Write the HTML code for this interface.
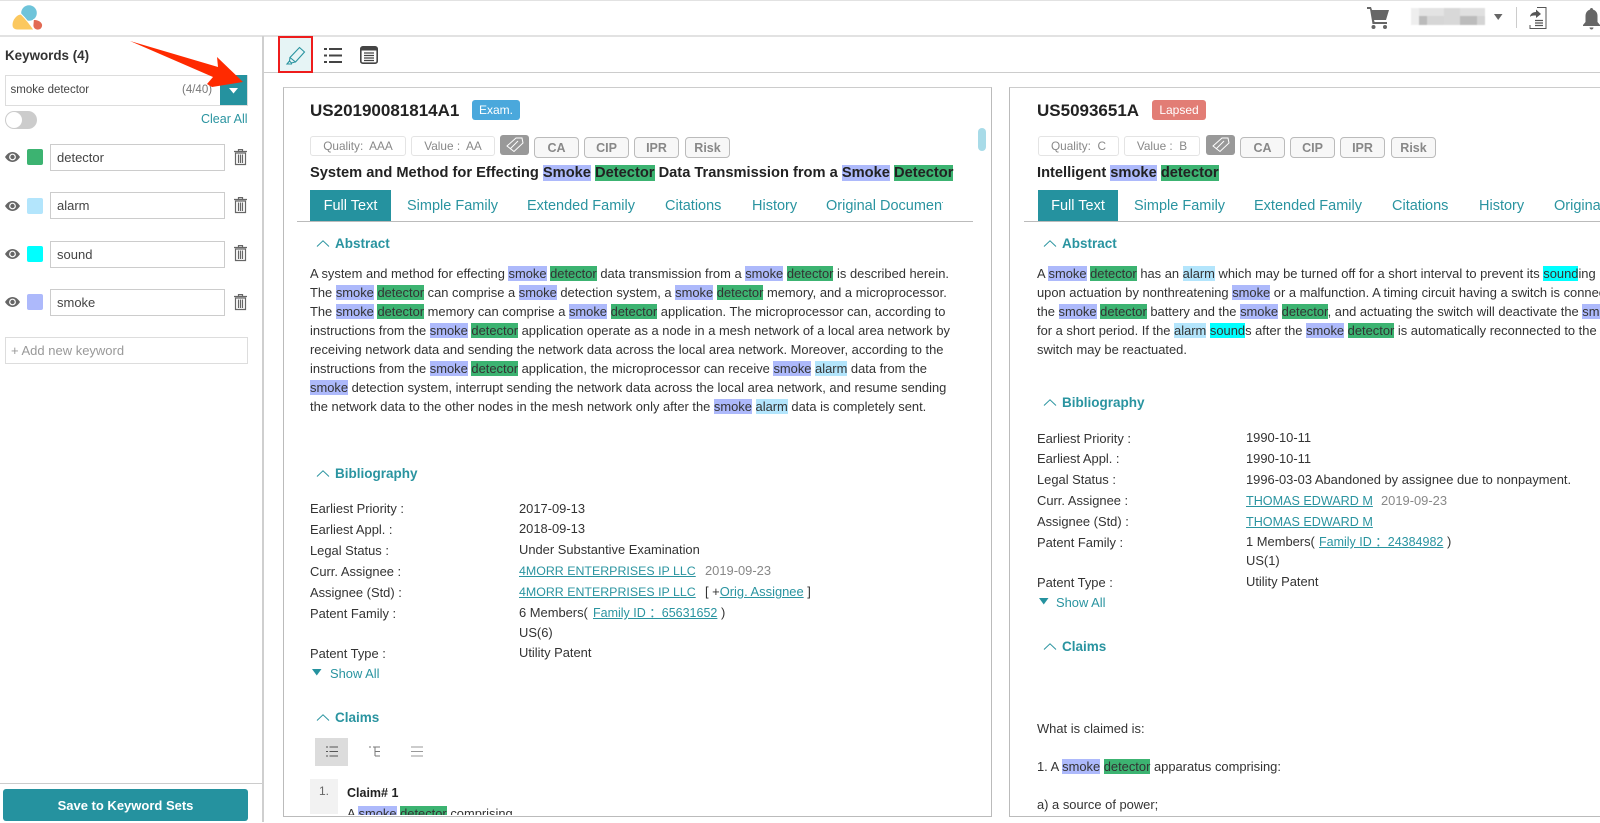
<!DOCTYPE html>
<html><head><meta charset="utf-8"><title>Patent comparison</title>
<style>
html,body{margin:0;padding:0;background:#fff}
body{width:1600px;height:822px;overflow:hidden;position:relative;font-family:"Liberation Sans",Arial,sans-serif;color:#333;font-size:12.92px}
.a{position:absolute;white-space:nowrap}
.box{position:absolute;box-sizing:border-box}
.t{position:absolute;white-space:nowrap;line-height:19px;height:19px}
.s{background:#adb9fb}.d{background:#3cb371}.l{background:#b3e5fc}.n{background:#0ff}
.h{position:absolute;white-space:nowrap;font-weight:bold;color:#2a94a0;font-size:13.5px;line-height:18px}
.tl{position:absolute;white-space:nowrap;color:#2a94a0;font-size:14.5px;line-height:20px;top:196px}
.chip{position:absolute;box-sizing:border-box;top:137px;height:21px;border:1px solid #bbb;border-radius:4px;background:#f7f7f7;color:#888;font-weight:bold;font-size:12.5px;line-height:20px;text-align:center}
.qv{position:absolute;box-sizing:border-box;top:136px;height:20px;border:1px solid #e4e4e4;border-radius:3px;color:#888;font-size:11.8px;line-height:18px;text-align:center}
.tag{position:absolute;top:135px;width:29px;height:20px;background:#999;border-radius:3px}
.kw{position:absolute;box-sizing:border-box;left:50px;width:175px;height:27px;border:1px solid #ccc;padding-left:6px;line-height:25px;font-size:13px;color:#444}
.sw{position:absolute;left:27px;width:16px;height:16px;border-radius:2px}
a{color:#2a94a0;text-decoration:underline}
.g{color:#888}
.ft{position:absolute;top:190px;height:31px;background:#25929f;color:#fff;font-size:14.5px;line-height:32px;text-align:center;white-space:nowrap}
.ln{position:absolute;top:221px;height:1px;background:#bbb}
svg{position:absolute;overflow:visible}
</style></head><body>

<!-- header -->
<div class="box" style="left:0;top:0;width:1600px;height:1px;background:#e2e2e2"></div>
<div class="box" style="left:0;top:35px;width:1600px;height:2px;background:#e2e2e2"></div>
<svg style="left:0;top:0" width="50" height="36">
<circle cx="29" cy="13" r="7.8" fill="#6ec4da"/>
<path d="M12 25C12 19 17 14 21 14 25 18 30 24 34 30H17C14 30 12 28 12 25z" fill="#fbc85f" stroke="#fff" stroke-width="1"/>
<path d="M33.500 19.500C38 19.500 42.500 21.500 42.500 25.500 42.500 28.500 40 30 37.500 30 35 30 33 28 33 25.500z" fill="#e26a54" stroke="#fff" stroke-width=".8"/>
</svg>
<svg style="left:1367px;top:7px" width="23" height="22" viewBox="0 0 23 22"><path d="M0 0h4l1 3h17l-3 10H7l.6 2H20v2H5.500L3 2H0z" fill="#666"/><circle cx="6.500" cy="20" r="2" fill="#666"/><circle cx="18" cy="20" r="2" fill="#666"/></svg>
<div style="position:absolute;left:0;top:0;width:1600px;height:36px;filter:blur(.6px)">
<div class="box" style="left:1411px;top:8px;width:74px;height:17px;background:#eee"></div>
<div class="box" style="left:1419px;top:16px;width:8px;height:9px;background:#bbb"></div>
<div class="box" style="left:1427px;top:16px;width:17px;height:9px;background:#d6d6d6"></div>
<div class="box" style="left:1419px;top:8px;width:25px;height:8px;background:#e3e3e3"></div>
<div class="box" style="left:1444px;top:8px;width:16px;height:17px;background:#d8d8d8"></div>
<div class="box" style="left:1460px;top:16px;width:17px;height:9px;background:#bcbcbc"></div>
<div class="box" style="left:1477px;top:16px;width:8px;height:9px;background:#d4d4d4"></div>
<div class="box" style="left:1460px;top:8px;width:25px;height:8px;background:#e0e0e0"></div>
</div>
<svg style="left:1494px;top:14px" width="9" height="6"><path d="M0 0h8.500L4.200 6z" fill="#666"/></svg>
<div class="box" style="left:1516px;top:7px;width:1px;height:21px;background:#ccc"></div>
<svg style="left:1529px;top:7px" width="18" height="22" viewBox="0 0 18 22" fill="none" stroke="#555"><path d="M8 .5h9v21H1V18" stroke-width="1"/><path d="M1 10c0-3 3-5 6-5V2.500l5 4.500-5 4V8.500c-3 0-5 0-6 1.500z" fill="#555" stroke="none"/><path d="M6 13.500h8M6 16h8M6 18.500h8" stroke-width="1.300"/></svg>
<svg style="left:1583px;top:8px" width="17" height="22" viewBox="0 0 17 22"><path d="M8.500 0c1 0 1.500.7 1.500 1.500C13 2.500 14.500 5 14.500 8v6l2.500 3v1H0v-1l2.500-3V8C2.500 5 4 2.500 7 1.500 7 .7 7.500 0 8.500 0z" fill="#666"/><path d="M6.500 19.500h4c0 1-1 2-2 2s-2-1-2-2z" fill="#666"/></svg>

<!-- sidebar -->
<div class="box" style="left:262px;top:36px;width:2px;height:786px;background:#cfcfcf"></div>
<div class="a" style="left:5px;top:47px;font-size:13.4px;font-weight:bold;line-height:18px;color:#333">Keywords (4)</div>
<div class="box" style="left:5px;top:75px;width:243px;height:31px;border:1px solid #ddd;background:#fff"></div>
<div class="a" style="left:10.500px;top:81px;font-size:11.500px;line-height:18px;color:#444">smoke detector</div>
<div class="a" style="left:182px;top:81px;font-size:11.500px;line-height:18px;color:#777">(4/40)</div>
<div class="box" style="left:220px;top:75px;width:27px;height:30px;background:#25929f"></div>
<div class="box" style="left:5px;top:111px;width:32px;height:18px;border-radius:9px;background:#ccc"></div>
<div class="box" style="left:6px;top:112px;width:16px;height:16px;border-radius:8px;background:#fff"></div>
<div class="a" style="left:201px;top:110px;font-size:12.500px;line-height:18px;color:#2a94a0">Clear All</div>

<svg width="0" height="0" style="position:absolute"><defs>
<g id="eye"><path d="M0 5C2 1.800 4.700 0 7.500 0S13 1.800 15 5c-2 3.200-4.700 5-7.500 5S2 8.200 0 5z" fill="#666"/><circle cx="7.500" cy="5" r="3.400" fill="#fff"/><circle cx="7.500" cy="5" r="2.200" fill="#666"/></g>
<g id="tr" fill="none" stroke="#666" stroke-width="1.200"><path d="M0 2.500h13M4.500 2.500V.6h4v1.900"/><path d="M1.500 4h10v11.500h-10z"/><path d="M4.500 5.500v8.500M6.500 5.500v8.500M8.500 5.500v8.500"/></g>
<g id="ch" fill="none" stroke="#2a94a0" stroke-width="1"><path d="M0 6.500L6 .8l6 5.700"/></g>
</defs></svg>

<svg style="left:5px;top:152px" width="15" height="10"><use href="#eye"/></svg>
<div class="sw" style="top:149px;background:#3cb371"></div>
<div class="kw" style="top:144px">detector</div>
<svg style="left:234px;top:149px" width="13" height="16"><use href="#tr"/></svg>

<svg style="left:5px;top:201px" width="15" height="10"><use href="#eye"/></svg>
<div class="sw" style="top:198px;background:#b3e5fc"></div>
<div class="kw" style="top:192px">alarm</div>
<svg style="left:234px;top:197px" width="13" height="16"><use href="#tr"/></svg>

<svg style="left:5px;top:249px" width="15" height="10"><use href="#eye"/></svg>
<div class="sw" style="top:246px;background:#0ff"></div>
<div class="kw" style="top:241px">sound</div>
<svg style="left:234px;top:245px" width="13" height="16"><use href="#tr"/></svg>

<svg style="left:5px;top:297px" width="15" height="10"><use href="#eye"/></svg>
<div class="sw" style="top:294px;background:#adb9fb"></div>
<div class="kw" style="top:289px">smoke</div>
<svg style="left:234px;top:294px" width="13" height="16"><use href="#tr"/></svg>

<div class="box" style="left:5px;top:337px;width:243px;height:27px;border:1px solid #ddd;padding-left:5px;line-height:25px;font-size:13px;color:#999">+ Add new keyword</div>
<div class="box" style="left:0;top:783px;width:262px;height:1px;background:#ccc"></div>
<div class="box" style="left:3px;top:789px;width:245px;height:32px;background:#25929f;border-radius:3px;color:#fff;font-size:13px;font-weight:bold;text-align:center;line-height:34px">Save to Keyword Sets</div>

<!-- toolbar -->
<div class="box" style="left:264px;top:72px;width:1336px;height:1px;background:#ccc"></div>
<div class="box" style="left:278px;top:36px;width:35px;height:37px;border:2px solid #ee1c1c;background:#e6f4f5"></div>
<svg style="left:286px;top:46px" width="20" height="19" viewBox="0 0 20 19" fill="none" stroke="#2a94a0" stroke-width="1.100"><path d="M13.500 1.500l5 4.500-9 10-5.500-4.500z"/><path d="M4 11.500l-.5 3.500L5.500 17l3.500-1"/><path d="M3.500 15L1 18h5"/></svg>
<svg style="left:324px;top:47px" width="18" height="17" viewBox="0 0 18 17"><g fill="#444"><rect x="0" y="1" width="3" height="2"/><rect x="5" y="1" width="13" height="2"/><rect x="0" y="7.500" width="3" height="2"/><rect x="5" y="7.500" width="13" height="2"/><rect x="0" y="14" width="3" height="2"/><rect x="5" y="14" width="13" height="2"/></g></svg>
<svg style="left:360px;top:46px" width="18" height="18" viewBox="0 0 18 18"><rect x=".8" y=".8" width="16.400" height="16.400" rx="2" fill="none" stroke="#444" stroke-width="1.600"/><rect x="1" y="1" width="16" height="3.500" fill="#444"/><path d="M4 7h10M4 9.500h10M4 12h10M4 14.500h10" stroke="#444" stroke-width="1.200"/></svg>

<!-- card 1 -->
<div class="box" style="left:283px;top:87px;width:709px;height:730px;border:1px solid #bbb;border-top-color:#ccc"></div>
<div class="a" style="left:310px;top:101px;font-size:17px;font-weight:bold;line-height:20px;color:#222">US20190081814A1</div>
<div class="box" style="left:472px;top:100px;width:48px;height:20px;background:#4aa8dc;border-radius:3px;color:#fff;font-size:12px;text-align:center;line-height:20px">Exam.</div>
<div class="box" style="left:978px;top:128px;width:8px;height:23px;border-radius:4px;background:#a8dbe8"></div>
<div class="qv" style="left:310px;width:96px">Quality:&nbsp; AAA</div>
<div class="qv" style="left:411px;width:84px">Value :&nbsp; AA</div>
<div class="tag" style="left:500px"></div>
<svg style="left:505px;top:137px" width="20" height="16" viewBox="0 0 20 16" fill="none" stroke="#fff" stroke-width="1"><path d="M2 9l9-8h6l1 5-9 8.500z"/><path d="M5 12l8-8"/></svg>
<div class="chip" style="left:534px;width:45px">CA</div>
<div class="chip" style="left:584px;width:45px">CIP</div>
<div class="chip" style="left:634px;width:45px">IPR</div>
<div class="chip" style="left:685px;width:45px">Risk</div>
<div class="a" style="left:310px;top:165px;font-size:14.66px;font-weight:bold;line-height:17px;color:#222">System and Method for Effecting <span class="s">Smoke</span> <span class="d">Detector</span> Data Transmission from a <span class="s">Smoke</span> <span class="d">Detector</span></div>
<div class="ft" style="left:310px;width:81px">Full Text</div>
<div class="ln" style="left:297px;width:676px"></div>
<div class="tl" style="left:407px">Simple Family</div>
<div class="tl" style="left:527px">Extended Family</div>
<div class="tl" style="left:665px">Citations</div>
<div class="tl" style="left:752px">History</div>
<div class="tl" style="left:826px;width:117px;overflow:hidden">Original Document</div>

<svg style="left:317px;top:240px" width="12" height="8"><use href="#ch"/></svg>
<div class="h" style="left:335px;top:235px">Abstract</div>
<div class="t" style="left:310px;top:264px">A system and method for effecting <span class="s">smoke</span> <span class="d">detector</span> data transmission from a <span class="s">smoke</span> <span class="d">detector</span> is described herein.</div>
<div class="t" style="left:310px;top:283px">The <span class="s">smoke</span> <span class="d">detector</span> can comprise a <span class="s">smoke</span> detection system, a <span class="s">smoke</span> <span class="d">detector</span> memory, and a microprocessor.</div>
<div class="t" style="left:310px;top:302px">The <span class="s">smoke</span> <span class="d">detector</span> memory can comprise a <span class="s">smoke</span> <span class="d">detector</span> application. The microprocessor can, according to</div>
<div class="t" style="left:310px;top:321px">instructions from the <span class="s">smoke</span> <span class="d">detector</span> application operate as a node in a mesh network of a local area network by</div>
<div class="t" style="left:310px;top:340px">receiving network data and sending the network data across the local area network. Moreover, according to the</div>
<div class="t" style="left:310px;top:359px">instructions from the <span class="s">smoke</span> <span class="d">detector</span> application, the microprocessor can receive <span class="s">smoke</span> <span class="l">alarm</span> data from the</div>
<div class="t" style="left:310px;top:378px"><span class="s">smoke</span> detection system, interrupt sending the network data across the local area network, and resume sending</div>
<div class="t" style="left:310px;top:397px">the network data to the other nodes in the mesh network only after the <span class="s">smoke</span> <span class="l">alarm</span> data is completely sent.</div>

<svg style="left:317px;top:470px" width="12" height="8"><use href="#ch"/></svg>
<div class="h" style="left:335px;top:465px">Bibliography</div>
<div class="t" style="left:310px;top:499px">Earliest Priority :</div><div class="t" style="left:519px;top:499px">2017-09-13</div>
<div class="t" style="left:310px;top:520px">Earliest Appl. :</div><div class="t" style="left:519px;top:519px">2018-09-13</div>
<div class="t" style="left:310px;top:541px">Legal Status :</div><div class="t" style="left:519px;top:540px">Under Substantive Examination</div>
<div class="t" style="left:310px;top:562px">Curr. Assignee :</div><div class="t" style="left:519px;top:561px"><a style="font-size:12.4px">4MORR ENTERPRISES IP LLC</a></div><div class="t g" style="left:705px;top:561px">2019-09-23</div>
<div class="t" style="left:310px;top:583px">Assignee (Std) :</div><div class="t" style="left:519px;top:582px"><a style="font-size:12.4px">4MORR ENTERPRISES IP LLC</a></div><div class="t" style="left:705px;top:582px">[ +<a>Orig. Assignee</a> ]</div>
<div class="t" style="left:310px;top:604px">Patent Family :</div><div class="t" style="left:519px;top:603px">6 Members(</div><div class="t" style="left:593px;top:603px"><a style="font-size:12.5px">Family ID ：65631652</a> )</div>
<div class="t" style="left:519px;top:623px">US(6)</div>
<div class="t" style="left:310px;top:644px">Patent Type :</div><div class="t" style="left:519px;top:643px">Utility Patent</div>
<svg style="left:312px;top:669px" width="10" height="7"><path d="M0 0h9.500L4.750 6.500z" fill="#25929f"/></svg>
<div class="t" style="left:330px;top:664px;color:#2a94a0">Show All</div>

<svg style="left:317px;top:714px" width="12" height="8"><use href="#ch"/></svg>
<div class="h" style="left:335px;top:709px">Claims</div>
<div class="box" style="left:315px;top:738px;width:33px;height:28px;background:#dcdcdc"></div>
<svg style="left:326px;top:746px" width="12" height="11" viewBox="0 0 12 11"><path d="M0 1h2M3.500 1H12M0 5.500h2M3.500 5.500H12M0 10h2M3.500 10H12" stroke="#555" stroke-width="1"/></svg>
<svg style="left:369px;top:746px" width="12" height="11" viewBox="0 0 12 11" fill="none" stroke="#777"><path d="M0 1h2M4 1h7M6 1v9M6 5.500h5M6 10h5"/></svg>
<svg style="left:411px;top:746px" width="12" height="11" viewBox="0 0 12 11" fill="none" stroke="#999"><path d="M0 1h12M0 5.500h12M0 10h12"/></svg>
<div class="box" style="left:310px;top:779px;width:28px;height:35px;background:#f2f2f2;text-align:center;line-height:25px;color:#666;font-size:12px">1.</div>
<div class="a" style="left:347px;top:784px;line-height:18px;font-weight:bold;font-size:12.500px;color:#222">Claim# 1</div>
<div class="box" style="left:347px;top:805px;width:400px;height:10px;overflow:hidden"><div class="a" style="left:0;top:-1px;line-height:19px"><span>A </span><span class="s">smoke</span> <span class="d">detector</span> comprising</div></div>

<!-- card 2 -->
<div class="box" style="left:1009px;top:87px;width:620px;height:730px;border:1px solid #bbb;border-top-color:#ccc"></div>
<div class="a" style="left:1037px;top:101px;font-size:17px;font-weight:bold;line-height:20px;color:#222">US5093651A</div>
<div class="box" style="left:1152px;top:100px;width:54px;height:20px;background:#e27d75;border-radius:3px;color:#fff;font-size:12px;text-align:center;line-height:20px">Lapsed</div>
<div class="qv" style="left:1038px;width:81px">Quality:&nbsp; C</div>
<div class="qv" style="left:1124px;width:76px">Value :&nbsp; B</div>
<div class="tag" style="left:1206px"></div>
<svg style="left:1211px;top:137px" width="20" height="16" viewBox="0 0 20 16" fill="none" stroke="#fff" stroke-width="1"><path d="M2 9l9-8h6l1 5-9 8.500z"/><path d="M5 12l8-8"/></svg>
<div class="chip" style="left:1240px;width:45px">CA</div>
<div class="chip" style="left:1290px;width:45px">CIP</div>
<div class="chip" style="left:1340px;width:45px">IPR</div>
<div class="chip" style="left:1391px;width:45px">Risk</div>
<div class="a" style="left:1037px;top:165px;font-size:14.66px;font-weight:bold;line-height:17px;color:#222">Intelligent <span class="s">smoke</span> <span class="d">detector</span></div>
<div class="ft" style="left:1038px;width:80px">Full Text</div>
<div class="ln" style="left:1024px;width:576px"></div>
<div class="tl" style="left:1134px">Simple Family</div>
<div class="tl" style="left:1254px">Extended Family</div>
<div class="tl" style="left:1392px">Citations</div>
<div class="tl" style="left:1479px">History</div>
<div class="tl" style="left:1554px">Original Document</div>

<svg style="left:1044px;top:240px" width="12" height="8"><use href="#ch"/></svg>
<div class="h" style="left:1062px;top:235px">Abstract</div>
<div class="t" style="left:1037px;top:264px">A <span class="s">smoke</span> <span class="d">detector</span> has an <span class="l">alarm</span> which may be turned off for a short interval to prevent its <span class="n">sound</span>ing upon</div>
<div class="t" style="left:1037px;top:283px">upon actuation by nonthreatening <span class="s">smoke</span> or a malfunction. A timing circuit having a switch is connected</div>
<div class="t" style="left:1037px;top:302px">the <span class="s">smoke</span> <span class="d">detector</span> battery and the <span class="s">smoke</span> <span class="d">detector</span>, and actuating the switch will deactivate the <span class="s">smoke</span></div>
<div class="t" style="left:1037px;top:321px">for a short period. If the <span class="l">alarm</span> <span class="n">sound</span>s after the <span class="s">smoke</span> <span class="d">detector</span> is automatically reconnected to the</div>
<div class="t" style="left:1037px;top:340px">switch may be reactuated.</div>

<svg style="left:1044px;top:399px" width="12" height="8"><use href="#ch"/></svg>
<div class="h" style="left:1062px;top:394px">Bibliography</div>
<div class="t" style="left:1037px;top:429px">Earliest Priority :</div><div class="t" style="left:1246px;top:428px">1990-10-11</div>
<div class="t" style="left:1037px;top:449px">Earliest Appl. :</div><div class="t" style="left:1246px;top:449px">1990-10-11</div>
<div class="t" style="left:1037px;top:470px">Legal Status :</div><div class="t" style="left:1246px;top:470px">1996-03-03 Abandoned by assignee due to nonpayment.</div>
<div class="t" style="left:1037px;top:491px">Curr. Assignee :</div><div class="t" style="left:1246px;top:491px"><a style="font-size:12.6px">THOMAS EDWARD M</a></div><div class="t g" style="left:1381px;top:491px">2019-09-23</div>
<div class="t" style="left:1037px;top:512px">Assignee (Std) :</div><div class="t" style="left:1246px;top:512px"><a style="font-size:12.6px">THOMAS EDWARD M</a></div>
<div class="t" style="left:1037px;top:533px">Patent Family :</div><div class="t" style="left:1246px;top:532px">1 Members(</div><div class="t" style="left:1319px;top:532px"><a style="font-size:12.5px">Family ID ：24384982</a> )</div>
<div class="t" style="left:1246px;top:551px">US(1)</div>
<div class="t" style="left:1037px;top:573px">Patent Type :</div><div class="t" style="left:1246px;top:572px">Utility Patent</div>
<svg style="left:1039px;top:598px" width="10" height="7"><path d="M0 0h9.500L4.750 6.500z" fill="#25929f"/></svg>
<div class="t" style="left:1056px;top:593px;color:#2a94a0">Show All</div>

<svg style="left:1044px;top:643px" width="12" height="8"><use href="#ch"/></svg>
<div class="h" style="left:1062px;top:638px">Claims</div>
<div class="t" style="left:1037px;top:719px">What is claimed is:</div>
<div class="t" style="left:1037px;top:757px">1. A <span class="s">smoke</span> <span class="d">detector</span> apparatus comprising:</div>
<div class="t" style="left:1037px;top:795px">a) a source of power;</div>

<!-- red arrow -->
<svg style="left:0;top:0" width="260" height="110"><path d="M130 41L218 67 217 57 243 82 212 87 207 84 213 77z" fill="#ff2a00"/></svg>
<svg style="left:229px;top:88px" width="10" height="6"><path d="M0 0h9L4.500 5.500z" fill="#fff"/></svg>
</body></html>
